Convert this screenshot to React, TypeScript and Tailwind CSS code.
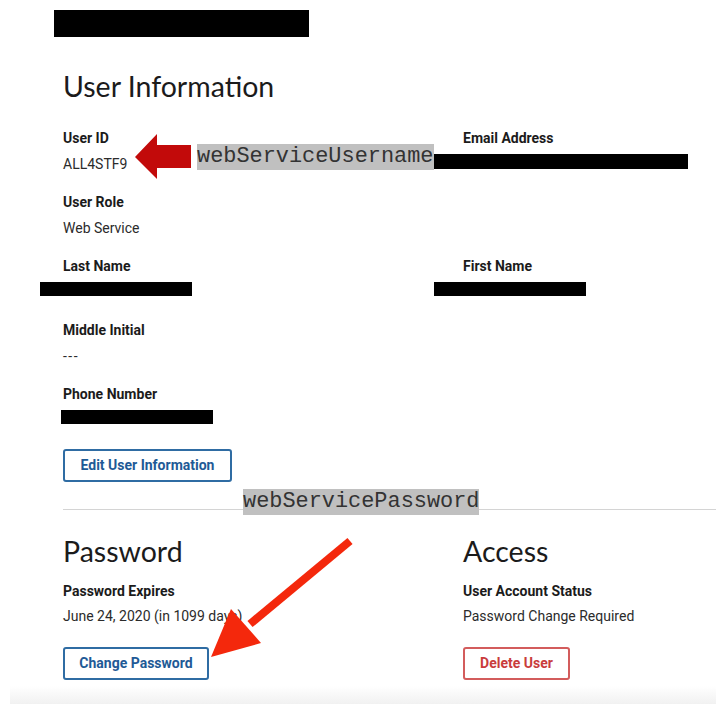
import React from "react";

const Label = ({ children }: { children: React.ReactNode }) => (
  <div className="text-[14px] leading-[20px] font-bold text-[#1b1b1b]">{children}</div>
);

const Value = ({ children }: { children: React.ReactNode }) => (
  <div className="mt-[6px] h-[20px] text-[14px] leading-[20px] text-[#2b2b2b]">{children}</div>
);

const Redacted = ({ className }: { className: string }) => <div className={`bg-black ${className}`} />;

const Field = ({ label, children }: { label: string; children: React.ReactNode }) => (
  <div className="mb-[18px]">
    <Label>{label}</Label>
    <Value>{children}</Value>
  </div>
);

const Tag = ({ text, className }: { text: string; className: string }) => (
  <div
    className={`absolute h-[26px] bg-[#c0c0c0] text-[21.9px] leading-[26px] text-[#333] font-['Liberation_Mono',monospace] ${className}`}
  >
    {text}
  </div>
);

const App = () => {
  return (
    <div className="relative w-[716px] h-[704px] overflow-hidden bg-white font-['Roboto',sans-serif]">
      <div className="pt-[10px]">
        <Redacted className="ml-[54px] w-[255px] h-[27px]" />
      </div>

      <div className="pl-[63px]">
        <h1 className="mt-[32px] text-[28.5px] leading-[34px] font-normal text-[#1b1b1b] font-['Lato',sans-serif]">
          User Information
        </h1>

        <div className="mt-[25px] grid grid-cols-[400px_1fr]">
          <div>
            <Field label="User ID">ALL4STF9</Field>
            <Field label="User Role">Web Service</Field>
            <Field label="Last Name">
              <Redacted className="mt-[1px] -ml-[23px] w-[152px] h-[14px]" />
            </Field>
            <Field label="Middle Initial">
              <span className="tracking-[1.5px]">---</span>
            </Field>
            <Field label="Phone Number">
              <Redacted className="mt-[2px] -ml-[2px] w-[152px] h-[14px]" />
            </Field>
          </div>
          <div>
            <Field label="Email Address">
              <Redacted className="-ml-[29px] w-[254px] h-[15px]" />
            </Field>
            <div className="h-[64px]" />
            <Field label="First Name">
              <Redacted className="mt-[1px] -ml-[29px] w-[152px] h-[14px]" />
            </Field>
          </div>
        </div>

        <button className="mt-[1px] h-[33px] w-[169px] rounded-[3px] border-2 border-[#2f6ca3] text-[14px] font-bold text-[#1e5a96]">
          Edit User Information
        </button>

        <div className="mt-[27px] h-px bg-[#d4d4d4]" />

        <div className="grid grid-cols-[400px_1fr]">
          <div>
            <h2 className="mt-[24px] text-[28.5px] leading-[34px] font-normal text-[#1b1b1b] font-['Lato',sans-serif]">
              Password
            </h2>
            <div className="mt-[13px]">
              <Label>Password Expires</Label>
            </div>
            <div className="mt-[5px] text-[14px] leading-[20px] text-[#2b2b2b]">June 24, 2020 (in 1099 days)</div>
            <button className="mt-[21px] h-[33px] w-[146px] rounded-[3px] border-2 border-[#2f6ca3] text-[14px] font-bold text-[#1e5a96]">
              Change Password
            </button>
          </div>
          <div>
            <h2 className="mt-[24px] text-[28.5px] leading-[34px] font-normal text-[#1b1b1b] font-['Lato',sans-serif]">
              Access
            </h2>
            <div className="mt-[13px]">
              <Label>User Account Status</Label>
            </div>
            <div className="mt-[5px] text-[14px] leading-[20px] text-[#2b2b2b]">Password Change Required</div>
            <button className="mt-[21px] h-[33px] w-[107px] rounded-[3px] border-2 border-[#d35c5c] text-[14px] font-bold text-[#c93c3c]">
              Delete User
            </button>
          </div>
        </div>
      </div>

      <div className="mt-[6px] ml-[10px] h-[18px] bg-gradient-to-b from-white to-[#f1f1f1]" />

      {/* annotations laid over the page */}
      <Tag text="webServiceUsername" className="left-[197px] top-[144px] w-[237px]" />
      <Tag text="webServicePassword" className="left-[243px] top-[489px] w-[236px]" />
      <svg className="pointer-events-none absolute inset-0" width="716" height="704" viewBox="0 0 716 704">
        <polygon points="135,157 157,134 157,145 191,145 191,168 157,168 157,179" fill="#c20a0a" />
        <line x1="350" y1="541" x2="250" y2="624" stroke="#f4280c" strokeWidth="8" />
        <polygon points="211,657 231,609 261,643" fill="#f4280c" />
      </svg>
    </div>
  );
};

export default App;
